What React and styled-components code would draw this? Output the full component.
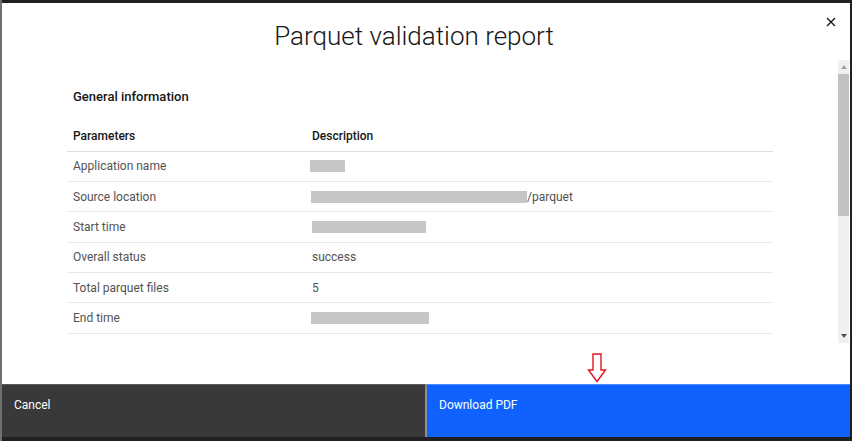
import styled, { createGlobalStyle } from "styled-components";

const GlobalStyle = createGlobalStyle`
  html, body {
    margin: 0;
    padding: 0;
    background: #1f1f1f;
    font-family: Roboto, "Noto Sans", sans-serif;
    overflow: hidden;
  }
  * { box-sizing: border-box; }
`;

const rows = [
  { label: "Application name", bar: 35 },
  { label: "Source location", bar: 216, text: "/parquet", offset: 1 },
  { label: "Start time", bar: 114, offset: 2 },
  { label: "Overall status", text: "success", offset: 2 },
  { label: "Total parquet files", text: "5", offset: 2 },
  { label: "End time", bar: 118, offset: 1 },
];

const App = () => {
  return (
    <>
      <GlobalStyle />
      <Backdrop>
        <Modal>
          <Header>
            <Title>Parquet validation report</Title>
            <Close aria-label="close">
              <svg width="10" height="10" viewBox="0 0 10 10">
                <path d="M1 1L9 9M9 1L1 9" stroke="#161616" strokeWidth="1.3" />
              </svg>
            </Close>
          </Header>
          <BodyRow>
            <Content>
              <SectionTitle>General information</SectionTitle>
              <Table>
                <thead>
                  <tr>
                    <Th>Parameters</Th>
                    <Th>Description</Th>
                  </tr>
                </thead>
                <tbody>
                  {rows.map((r) => (
                    <tr key={r.label}>
                      <Td>{r.label}</Td>
                      <Td>
                        <Value $offset={r.offset}>
                          {r.bar && <Redact style={{ width: r.bar }} />}
                          {r.text}
                        </Value>
                      </Td>
                    </tr>
                  ))}
                </tbody>
              </Table>
            </Content>
            <Scrollbar>
              <ScrollButton $dir="up" />
              <Track>
                <Thumb />
              </Track>
              <ScrollButton $dir="down" />
            </Scrollbar>
          </BodyRow>
          <Spacer />
          <Footer>
            <FooterButton $kind="secondary">Cancel</FooterButton>
            <FooterButton $kind="primary">Download PDF</FooterButton>
          </Footer>
          <Arrow width="20" height="30" viewBox="0 0 20 30">
            <path
              d="M6 1H14V17H18.5L10 28.5L1.5 17H6Z"
              fill="none"
              stroke="#e3141a"
              strokeWidth="1.4"
            />
          </Arrow>
        </Modal>
      </Backdrop>
    </>
  );
};

export default App;

const Backdrop = styled.div`
  width: 852px;
  height: 441px;
  padding: 3px 2px 4px 2px;
  background: linear-gradient(to right, #6f6f6f 0, #6f6f6f 2px, #1f1f1f 2px);
`;

const Modal = styled.div`
  position: relative;
  width: 848px;
  height: 434px;
  background: #fff;
  display: flex;
  flex-direction: column;
`;

const Header = styled.div`
  position: relative;
  height: 57px;
  display: flex;
  justify-content: center;
  align-items: flex-start;
  padding-top: 15px;
  flex-shrink: 0;
`;

const Title = styled.h2`
  margin: 0;
  font-size: 26px;
  font-weight: 300;
  color: #161616;
  line-height: 36px;
  transform: translateX(-12px);
`;

const Close = styled.button`
  position: absolute;
  top: 11px;
  right: 11px;
  width: 16px;
  height: 16px;
  padding: 0;
  border: none;
  background: none;
  display: flex;
  align-items: center;
  justify-content: center;
`;

const BodyRow = styled.div`
  height: 283px;
  flex-shrink: 0;
  display: flex;
  padding-right: 1px;
`;

const Content = styled.div`
  flex: 1;
  overflow: hidden;
  padding: 27px 0 0 65px;
`;

const Scrollbar = styled.div`
  width: 11px;
  display: flex;
  flex-direction: column;
  background: #f0f0f0;
`;

const ScrollButton = styled.div`
  height: 14px;
  display: flex;
  align-items: center;
  justify-content: center;
  &::before {
    content: "";
    border-left: 3.5px solid transparent;
    border-right: 3.5px solid transparent;
    ${(p) =>
      p.$dir === "up"
        ? "border-bottom: 4px solid #a3a3a3;"
        : "border-top: 4px solid #505050;"}
  }
`;

const Track = styled.div`
  flex: 1;
`;

const Thumb = styled.div`
  height: 142px;
  background: #c1c1c1;
`;

const SectionTitle = styled.h3`
  margin: 0 0 14px 6px;
  font-size: 13px;
  font-weight: 500;
  color: #161616;
  line-height: 20px;
`;

const Table = styled.table`
  width: 706px;
  border-collapse: collapse;
  font-size: 12px;
`;

const Th = styled.th`
  text-align: left;
  font-weight: 500;
  color: #161616;
  height: 30px;
  padding: 0 6px;
  border-bottom: 1px solid #e0e0e0;
  &:first-child {
    width: 243px;
  }
  &:last-child {
    padding-left: 2px;
  }
`;

const Td = styled.td`
  color: #525252;
  height: 30.4px;
  padding: 0 6px;
  border-bottom: 1px solid #e8e8e8;
  &:first-child {
    width: 243px;
  }
  &:last-child {
    padding-left: 0;
  }
`;

const Value = styled.div`
  display: flex;
  align-items: center;
  padding-left: ${(p) => p.$offset || 0}px;
`;

const Redact = styled.span`
  display: inline-block;
  height: 12px;
  background: #c6c6c6;
`;

const Spacer = styled.div`
  flex: 1;
`;

const Footer = styled.div`
  height: 53px;
  display: flex;
  flex-shrink: 0;
`;

const FooterButton = styled.button`
  flex: 1;
  display: flex;
  align-items: flex-start;
  padding: 13px 12px 0;
  border: none;
  font-family: inherit;
  font-size: 12px;
  text-align: left;
  color: #fff;
  background: ${(p) => (p.$kind === "primary" ? "#0f62fe" : "#393939")};
  border-top: 1px solid
    ${(p) => (p.$kind === "primary" ? "#4d8bff" : "#5a5a5a")};
  border-left: ${(p) => (p.$kind === "primary" ? "2px solid #8d8d8d" : "none")};
`;

const Arrow = styled.svg`
  position: absolute;
  left: 585px;
  top: 350px;
`;
